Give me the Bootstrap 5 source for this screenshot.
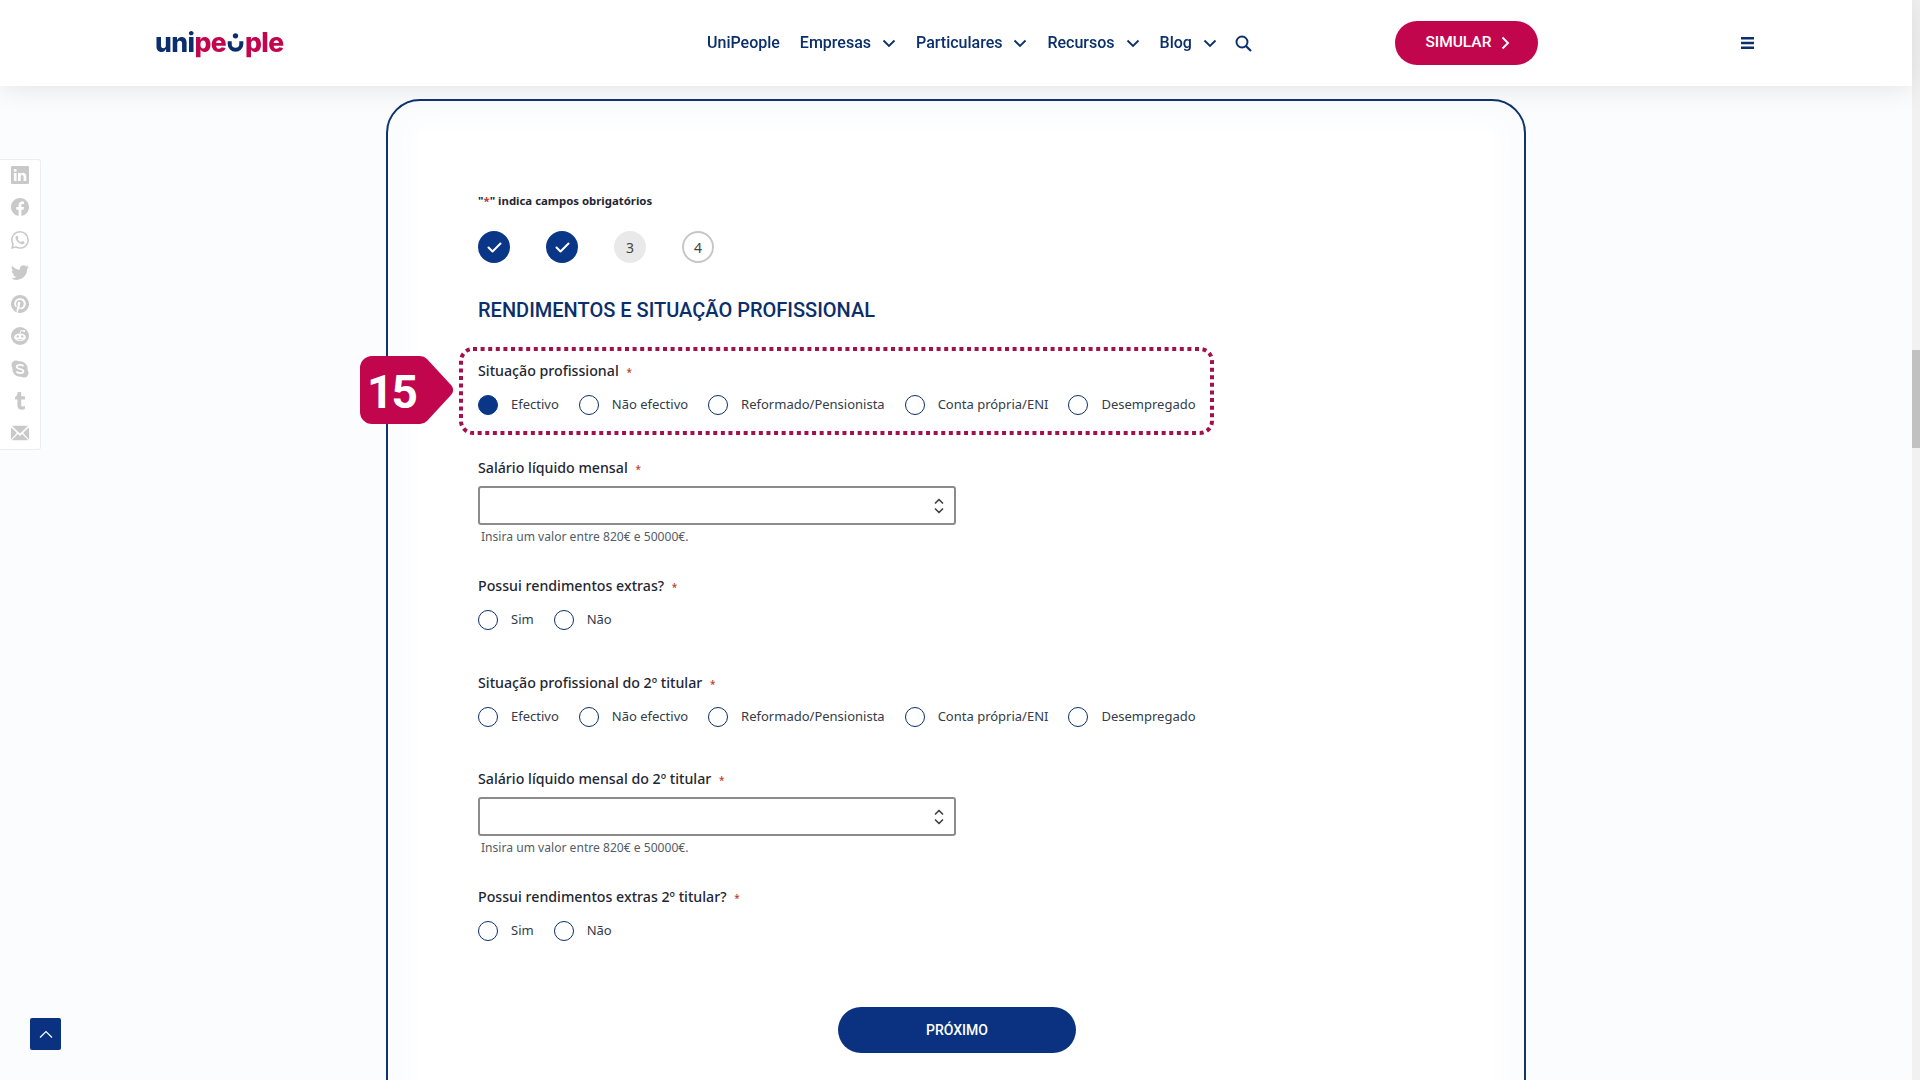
<!DOCTYPE html>
<html lang="pt">

<head>
    <meta charset="UTF-8">
    <meta name="viewport" content="width=device-width, initial-scale=1">
    <title>UniPeople - Simulador</title>
    <link href="https://cdn.jsdelivr.net/npm/bootstrap@5.3.0/dist/css/bootstrap.min.css" rel="stylesheet">
    <style>
        html, body {
            height: 1080px;
            overflow: hidden;
        }

        body {
            background-color: #fbfcfe;
            font-family: "Noto Sans", sans-serif;
            color: #1f2733;
        }

        /* header */
        .site-header {
            position: relative;
            z-index: 5;
            height: 86px;
            margin-right: 8px;
            padding: 0 0 0 155px;
            background: #fff;
            box-shadow: 0 2px 26px rgba(0, 0, 0, .1);
            flex-wrap: nowrap;
            justify-content: flex-start;
        }

        .logo-text {
            display: flex;
            align-items: baseline;
            width: 552px;
            margin-top: -2px;
            font-family: Inter, sans-serif;
            font-size: 26.5px;
            font-weight: 800;
            line-height: 1;
            letter-spacing: -.6px;
            color: #c2064e;
        }

        .logo-navy {
            color: #0a2f6b;
        }

        .logo-smile {
            width: 17px;
            height: 24px;
            margin: 0 1px;
            align-self: flex-end;
        }

        .main-links {
            gap: 20px;
        }

        .main-links a {
            display: flex;
            align-items: center;
            gap: 11px;
            font-family: Roboto, sans-serif;
            font-size: 16px;
            font-weight: 500;
            color: #0a2f6b;
            text-decoration: none;
        }

        .search-link {
            margin-left: -2px;
        }

        .btn-simular {
            display: flex;
            align-items: center;
            justify-content: center;
            gap: 10px;
            width: 143px;
            height: 44px;
            margin-left: 143px;
            padding: 0 0 0 3px;
            border: 0;
            border-radius: 22px;
            background: #c2064e;
            color: #fff;
            font-family: Roboto, sans-serif;
            font-size: 15.5px;
            font-weight: 500;
        }

        .burger-icon {
            margin-left: 203px;
        }

        /* form card */
        .form-frame {
            width: 1140px;
            height: 1100px;
            margin: 13px 0 0 386px;
            border: 2px solid #0a2f6b;
            border-radius: 34px;
            padding: 30px 30px 0;
        }

        .form-inner {
            height: 100%;
            padding: 61px 0 0 60px;
            background: #fff;
            box-shadow: 0 0 24px 8px #fff;
        }

        .req-note {
            height: 18px;
            font-size: 11.4px;
            font-weight: 700;
            line-height: 18px;
            color: #1f2733;
        }

        .req-star {
            color: #c0392b;
        }

        .step-row {
            gap: 36px;
            margin-top: 21px;
        }

        .step-dot {
            display: flex;
            align-items: center;
            justify-content: center;
            width: 32px;
            height: 32px;
            border-radius: 50%;
            font-size: 14px;
            color: #444;
        }

        .step-done {
            background: #0a3688;
        }

        .step-now {
            background: #e9e9e9;
        }

        .step-next {
            background: #fff;
            border: 2px solid #c6c6c6;
        }

        .form-title {
            margin: 33px 0 0;
            font-family: Roboto, sans-serif;
            font-size: 20px;
            font-weight: 500;
            line-height: 28px;
            color: #0a2f6b;
        }

        .field-marked {
            position: relative;
            width: 755px;
            height: 88px;
            margin: 23px 0 0 -19px;
            padding: 14px 19px 0;
        }

        .dot-outline {
            position: absolute;
            left: 0;
            top: 0;
            fill: none;
            stroke: #a3104e;
            stroke-width: 4;
            stroke-dasharray: 4 3.600;
        }

        .field-block {
            margin-top: 23px;
        }

        .field-label {
            display: block;
            height: 20px;
            margin: 0;
            font-size: 14.2px;
            font-weight: 500;
            line-height: 20px;
            color: #1f2733;
        }

        .field-label span {
            margin-left: 4px;
            font-size: 10px;
            color: #c0392b;
        }

        .radio-row {
            display: flex;
            gap: 20px;
            height: 24px;
            margin-top: 12px;
        }

        .radio-row .form-check {
            display: flex;
            align-items: center;
            gap: 13px;
            min-height: 0;
            margin: 0;
            padding: 0;
        }

        .radio-row .form-check-input {
            float: none;
            flex: none;
            width: 20px;
            height: 20px;
            margin: 0;
            border: 1.5px solid #0a2f6b;
        }

        .radio-row .form-check-input:checked {
            background-color: #0a3688;
            border-color: #0a3688;
            background-image: none;
        }

        .radio-row .form-check-label {
            font-size: 13px;
            white-space: nowrap;
            color: #333c48;
        }

        .select-box {
            width: 478px;
            height: 39px;
            margin-top: 8px;
            padding: 0 12px;
            border: 2px solid #8b8b8b;
            border-radius: 3px;
            background-color: #fff;
            background-image: url("data:image/svg+xml,%3csvg xmlns='http://www.w3.org/2000/svg' viewBox='0 0 12 20'%3e%3cpath fill='none' stroke='%23444' stroke-width='1.700' stroke-linecap='round' stroke-linejoin='round' d='M2.500 7 6 3.500 9.500 7M2.500 13 6 16.500 9.500 13'/%3e%3c/svg%3e");
            background-position: right 9px center;
            background-size: 12px 20px;
        }

        .field-hint {
            height: 16px;
            margin: 4px 0 0 3px;
            font-size: 12.1px;
            line-height: 16px;
            color: #555c66;
        }

        .btn-proximo {
            display: block;
            width: 238px;
            height: 46px;
            margin: 64px auto 0;
            border: 0;
            border-radius: 23px;
            background: #0a3280;
            color: #fff;
            font-family: Roboto, sans-serif;
            font-size: 14px;
            font-weight: 500;
            position: relative;
            left: -29px;
        }

        /* number flag sitting over the card edge */
        .step-flag {
            position: absolute;
            left: -99px;
            top: 9px;
            width: 93px;
            height: 68px;
        }

        .step-flag span {
            position: absolute;
            left: 7px;
            top: 2px;
            width: 60px;
            font-family: Roboto, sans-serif;
            font-size: 46px;
            font-weight: 700;
            line-height: 68px;
            letter-spacing: -2px;
            color: #fff;
        }

        /* floating things */
        .share-bar {
            position: fixed;
            left: 0;
            top: 159px;
            width: 41px;
            height: 291px;
            padding-top: 6px;
            background: #fff;
            border: 1px solid #ededed;
            border-left: 0;
            border-radius: 0 3px 3px 0;
            gap: 14.3px;
        }

        .share-bar svg {
            width: 18px;
            height: 18px;
            fill: #c9c9c9;
        }

        .back-top {
            position: fixed;
            left: 30px;
            top: 1018px;
            width: 31px;
            height: 32px;
            background: #0a3280;
            border-radius: 2px;
        }

        .fake-scroll {
            position: fixed;
            right: 0;
            top: 0;
            width: 8px;
            height: 1080px;
            background: #f1f1f1;
        }

        .fake-thumb {
            width: 100%;
            height: 98px;
            margin-top: 350px;
            background: #c1c1c1;
        }
    </style>
</head>

<body>
    <!-- Header -->
    <nav class="navbar site-header">
        <div class="logo-text">
            <span class="logo-navy">uni</span><span>pe</span>
            <svg class="logo-smile" viewBox="0 0 19 26">
                <circle cx="9.500" cy="5" r="3" fill="#0a2f6b" />
                <path d="M3 11v3a6.500 6.500 0 0 0 13 0v-3" fill="none" stroke="#0a2f6b" stroke-width="4.500" />
            </svg>
            <span>ple</span>
        </div>
        <div class="d-flex align-items-center main-links">
            <a href="#">UniPeople</a>
            <a href="#">Empresas <svg width="14" height="9" viewBox="0 0 14 9"><path d="M1.500 1.500 7 7l5.500-5.500" fill="none" stroke="#0a2f6b" stroke-width="1.800" /></svg></a>
            <a href="#">Particulares <svg width="14" height="9" viewBox="0 0 14 9"><path d="M1.500 1.500 7 7l5.500-5.500" fill="none" stroke="#0a2f6b" stroke-width="1.800" /></svg></a>
            <a href="#">Recursos <svg width="14" height="9" viewBox="0 0 14 9"><path d="M1.500 1.500 7 7l5.500-5.500" fill="none" stroke="#0a2f6b" stroke-width="1.800" /></svg></a>
            <a href="#">Blog <svg width="14" height="9" viewBox="0 0 14 9"><path d="M1.500 1.500 7 7l5.500-5.500" fill="none" stroke="#0a2f6b" stroke-width="1.800" /></svg></a>
            <a href="#" class="search-link" aria-label="Pesquisar"><svg width="17" height="17" viewBox="0 0 17 17"><circle cx="7" cy="7" r="5.500" fill="none" stroke="#0a2f6b" stroke-width="1.900" /><path d="m11 11 5 5" stroke="#0a2f6b" stroke-width="2.200" /></svg></a>
        </div>
        <button type="button" class="btn-simular">SIMULAR <svg width="9" height="14" viewBox="0 0 9 14"><path d="M1.500 1.500 7 7l-5.500 5.500" fill="none" stroke="#fff" stroke-width="1.900" /></svg></button>
        <svg class="burger-icon" width="13" height="12" viewBox="0 0 13 12"><path d="M0 0h13v2.500H0zM0 4.700h13v2.500H0zM0 9.500h13V12H0z" fill="#0a2f6b" /></svg>
    </nav>

    <!-- Form -->
    <div class="form-frame">
        <form class="form-inner">
            <div class="req-note">"<span class="req-star">*</span>" indica campos obrigatórios</div>

            <div class="d-flex step-row">
                <div class="step-dot step-done"><svg width="15" height="11" viewBox="0 0 15 11"><path d="m1.500 5.500 4 4 8-8" fill="none" stroke="#fff" stroke-width="2" stroke-linecap="round" stroke-linejoin="round" /></svg></div>
                <div class="step-dot step-done"><svg width="15" height="11" viewBox="0 0 15 11"><path d="m1.500 5.500 4 4 8-8" fill="none" stroke="#fff" stroke-width="2" stroke-linecap="round" stroke-linejoin="round" /></svg></div>
                <div class="step-dot step-now">3</div>
                <div class="step-dot step-next">4</div>
            </div>

            <h2 class="form-title">RENDIMENTOS E SITUAÇÃO PROFISSIONAL</h2>

            <div class="field-marked">
                <svg class="dot-outline" width="755" height="88" viewBox="0 0 755 88"><rect x="2" y="2" width="751" height="84" rx="12" /></svg>
                <div class="step-flag">
                    <svg width="93" height="68" viewBox="0 0 93 68"><path d="M12 0h48a10 10 0 0 1 7 3l24 26a7 7 0 0 1 0 10L67 65a10 10 0 0 1-7 3H12A12 12 0 0 1 0 56V12A12 12 0 0 1 12 0z" fill="#c2064e" /></svg>
                    <span>15</span>
                </div>
                <label class="field-label">Situação profissional <span>*</span></label>
                <div class="radio-row">
                    <div class="form-check"><input class="form-check-input" type="radio" name="sit1" id="sit1a" checked><label class="form-check-label" for="sit1a">Efectivo</label></div>
                    <div class="form-check"><input class="form-check-input" type="radio" name="sit1" id="sit1b"><label class="form-check-label" for="sit1b">Não efectivo</label></div>
                    <div class="form-check"><input class="form-check-input" type="radio" name="sit1" id="sit1c"><label class="form-check-label" for="sit1c">Reformado/Pensionista</label></div>
                    <div class="form-check"><input class="form-check-input" type="radio" name="sit1" id="sit1d"><label class="form-check-label" for="sit1d">Conta própria/ENI</label></div>
                    <div class="form-check"><input class="form-check-input" type="radio" name="sit1" id="sit1e"><label class="form-check-label" for="sit1e">Desempregado</label></div>
                </div>
            </div>

            <div class="field-block">
                <label class="field-label">Salário líquido mensal <span>*</span></label>
                <select class="form-select select-box"></select>
                <div class="field-hint">Insira um valor entre 820€ e 50000€.</div>
            </div>

            <div class="field-block" style="margin-top:31px">
                <label class="field-label">Possui rendimentos extras? <span>*</span></label>
                <div class="radio-row">
                    <div class="form-check"><input class="form-check-input" type="radio" name="ext1" id="ext1a"><label class="form-check-label" for="ext1a">Sim</label></div>
                    <div class="form-check"><input class="form-check-input" type="radio" name="ext1" id="ext1b"><label class="form-check-label" for="ext1b">Não</label></div>
                </div>
            </div>

            <div class="field-block" style="margin-top:41px">
                <label class="field-label">Situação profissional do 2º titular <span>*</span></label>
                <div class="radio-row">
                    <div class="form-check"><input class="form-check-input" type="radio" name="sit2" id="sit2a"><label class="form-check-label" for="sit2a">Efectivo</label></div>
                    <div class="form-check"><input class="form-check-input" type="radio" name="sit2" id="sit2b"><label class="form-check-label" for="sit2b">Não efectivo</label></div>
                    <div class="form-check"><input class="form-check-input" type="radio" name="sit2" id="sit2c"><label class="form-check-label" for="sit2c">Reformado/Pensionista</label></div>
                    <div class="form-check"><input class="form-check-input" type="radio" name="sit2" id="sit2d"><label class="form-check-label" for="sit2d">Conta própria/ENI</label></div>
                    <div class="form-check"><input class="form-check-input" type="radio" name="sit2" id="sit2e"><label class="form-check-label" for="sit2e">Desempregado</label></div>
                </div>
            </div>

            <div class="field-block" style="margin-top:40px">
                <label class="field-label">Salário líquido mensal do 2º titular <span>*</span></label>
                <select class="form-select select-box"></select>
                <div class="field-hint">Insira um valor entre 820€ e 50000€.</div>
            </div>

            <div class="field-block" style="margin-top:31px">
                <label class="field-label">Possui rendimentos extras 2º titular? <span>*</span></label>
                <div class="radio-row">
                    <div class="form-check"><input class="form-check-input" type="radio" name="ext2" id="ext2a"><label class="form-check-label" for="ext2a">Sim</label></div>
                    <div class="form-check"><input class="form-check-input" type="radio" name="ext2" id="ext2b"><label class="form-check-label" for="ext2b">Não</label></div>
                </div>
            </div>

            <button type="button" class="btn-proximo">PRÓXIMO</button>
        </form>
    </div>

    <!-- Share bar -->
    <div class="share-bar d-flex flex-column align-items-center">
        <svg viewBox="0 0 16 16"><path d="M0 1.146C0 .513.526 0 1.175 0h13.65C15.474 0 16 .513 16 1.146v13.708c0 .633-.526 1.146-1.175 1.146H1.175C.526 16 0 15.487 0 14.854V1.146zm4.943 12.248V6.169H2.542v7.225h2.401zm-1.2-8.212c.837 0 1.358-.554 1.358-1.248-.015-.709-.52-1.248-1.342-1.248-.822 0-1.359.54-1.359 1.248 0 .694.521 1.248 1.327 1.248h.016zm4.908 8.212V9.359c0-.216.016-.432.08-.586.173-.431.568-.878 1.232-.878.869 0 1.216.662 1.216 1.634v3.865h2.401V9.25c0-2.22-1.184-3.252-2.764-3.252-1.274 0-1.845.7-2.165 1.193v.025h-.016a5.54 5.54 0 0 1 .016-.025V6.169h-2.4c.03.678 0 7.225 0 7.225h2.4z" /></svg>
        <svg viewBox="0 0 16 16"><path d="M16 8.049c0-4.446-3.582-8.05-8-8.05C3.580 0-.002 3.603-.002 8.050c0 4.017 2.926 7.347 6.750 7.951v-5.625h-2.030V8.050H6.750V6.275c0-2.017 1.195-3.131 3.022-3.131.876 0 1.791.157 1.791.157v1.980h-1.009c-.993 0-1.303.621-1.303 1.258v1.510h2.218l-.354 2.326H9.250V16c3.824-.604 6.750-3.934 6.750-7.951z" /></svg>
        <svg viewBox="0 0 16 16"><path d="M13.601 2.326A7.854 7.854 0 0 0 7.994 0C3.627 0 .068 3.558.064 7.926c0 1.399.366 2.760 1.057 3.965L0 16l4.204-1.102a7.933 7.933 0 0 0 3.790.965h.004c4.368 0 7.926-3.558 7.930-7.930A7.898 7.898 0 0 0 13.600 2.326zM7.994 14.521a6.573 6.573 0 0 1-3.356-.920l-.240-.144-2.494.654.666-2.433-.156-.251a6.560 6.560 0 0 1-1.007-3.505c0-3.626 2.957-6.584 6.591-6.584a6.560 6.560 0 0 1 4.660 1.931 6.557 6.557 0 0 1 1.928 4.660c-.004 3.639-2.961 6.592-6.592 6.592zm3.615-4.934c-.197-.099-1.170-.578-1.353-.646-.182-.065-.315-.099-.445.099-.133.197-.513.646-.627.775-.114.133-.232.148-.430.050-.197-.100-.836-.308-1.592-.985-.590-.525-.985-1.175-1.103-1.372-.114-.198-.011-.304.088-.403.087-.088.197-.232.296-.346.100-.114.133-.198.198-.330.065-.134.034-.248-.015-.347-.050-.099-.445-1.076-.612-1.470-.160-.389-.323-.335-.445-.340-.114-.007-.247-.007-.380-.007a.729.729 0 0 0-.529.247c-.182.198-.691.677-.691 1.654 0 .977.710 1.916.810 2.049.098.133 1.394 2.132 3.383 2.992.470.205.840.326 1.129.418.475.152.904.129 1.246.080.380-.058 1.171-.480 1.338-.943.164-.464.164-.860.114-.943-.049-.084-.182-.133-.380-.232z" /></svg>
        <svg viewBox="0 0 16 16"><path d="M5.026 15c6.038 0 9.341-5.003 9.341-9.334 0-.140 0-.282-.006-.422A6.685 6.685 0 0 0 16 3.542a6.658 6.658 0 0 1-1.889.518 3.301 3.301 0 0 0 1.447-1.817 6.533 6.533 0 0 1-2.087.793A3.286 3.286 0 0 0 7.875 6.030a9.325 9.325 0 0 1-6.767-3.429 3.289 3.289 0 0 0 1.018 4.382A3.323 3.323 0 0 1 .640 6.575v.045a3.288 3.288 0 0 0 2.632 3.218 3.203 3.203 0 0 1-.865.115 3.230 3.230 0 0 1-.614-.057 3.283 3.283 0 0 0 3.067 2.277A6.588 6.588 0 0 1 .780 13.580a6.320 6.320 0 0 1-.780-.045A9.344 9.344 0 0 0 5.026 15z" /></svg>
        <svg viewBox="0 0 16 16"><path d="M8 0a8 8 0 0 0-2.915 15.452c-.070-.633-.134-1.606.027-2.297.146-.625.938-3.977.938-3.977s-.239-.479-.239-1.187c0-1.113.645-1.943 1.448-1.943.682 0 1.012.512 1.012 1.127 0 .686-.437 1.712-.663 2.663-.188.796.400 1.446 1.185 1.446 1.422 0 2.515-1.500 2.515-3.664 0-1.915-1.377-3.254-3.342-3.254-2.276 0-3.612 1.707-3.612 3.471 0 .688.265 1.425.595 1.826a.240.240 0 0 1 .056.230c-.061.252-.196.796-.222.907-.035.146-.116.177-.268.107-1-.465-1.624-1.926-1.624-3.100 0-2.523 1.834-4.840 5.286-4.840 2.775 0 4.932 1.977 4.932 4.620 0 2.757-1.739 4.976-4.151 4.976-.811 0-1.573-.421-1.834-.919l-.498 1.902c-.181.695-.669 1.566-.995 2.097A8 8 0 1 0 8 0z" /></svg>
        <svg viewBox="0 0 20 20"><circle cx="10" cy="10" r="10" /><ellipse cx="10" cy="11.500" rx="6.500" ry="4.300" fill="#fff" /><circle cx="7.500" cy="10.500" r="1.300" /><circle cx="12.500" cy="10.500" r="1.300" /><path d="M7.500 13.500c1.500 1 3.500 1 5 0" fill="none" stroke="#c9c9c9" /><path d="M10 7 11 3.800l3 .7" fill="none" stroke="#fff" /><circle cx="14.500" cy="4.500" r="1.200" fill="#fff" /></svg>
        <svg viewBox="0 0 20 20"><circle cx="5.500" cy="5.500" r="5" /><circle cx="14.500" cy="14.500" r="5" /><circle cx="10" cy="10" r="8.500" /><path d="M14 6.800C13 5 6.500 4.600 6.300 7.500c-.2 3 7.600 2 7.500 5-.1 2.800-6.500 2.400-7.800.3" fill="none" stroke="#fff" stroke-width="2" /></svg>
        <svg viewBox="0 0 20 20"><path d="M7.500 0h3.800v4.800h4.200v3.600h-4.200v6c0 1.900 2.200 2 4.200 1V19c-3.800 1.800-8.300.6-8.300-3.600V8.400H4.500V5.500C6.300 5 7.300 2.500 7.500 0z" /></svg>
        <svg viewBox="0 0 20 16"><path d="M1 0h18L10 8.500z" /><path d="M0 1.500v13.700L6.500 8zM20 1.500v13.700L13.500 8zM7.600 9 10 11.200 12.400 9 19.200 16H.8z" /></svg>
    </div>

    <a href="#" class="back-top d-flex align-items-center justify-content-center" aria-label="Topo"><svg width="14" height="8" viewBox="0 0 14 8"><path d="M1 7.500 7 1.500l6 6" fill="none" stroke="#fff" stroke-width="1.200" /></svg></a>

    <div class="fake-scroll"><div class="fake-thumb"></div></div>

    <script src="https://cdn.jsdelivr.net/npm/bootstrap@5.3.0/dist/js/bootstrap.bundle.min.js"></script>
</body>

</html>
